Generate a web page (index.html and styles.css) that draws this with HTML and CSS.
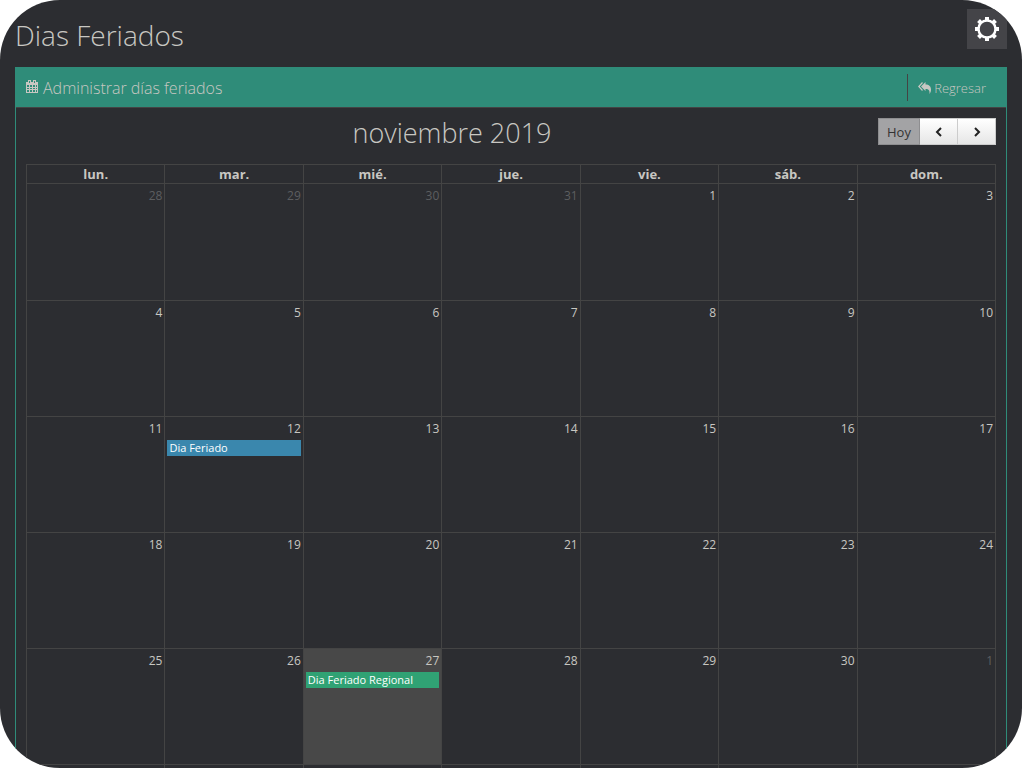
FILE: index.html
```html
<!DOCTYPE html>
<html lang="es">
<head>
    <meta charset="utf-8">
    <title>Dias Feriados</title>
    <meta name="viewport" content="width=device-width, initial-scale=1.0">
    <link rel="stylesheet" href="styles.css">
</head>
<body>
    <div class="page">
        <header class="page-header">
            <h1>Dias Feriados</h1>
            <button type="button" class="settings" aria-label="Opciones">
                <svg width="24" height="24" viewBox="0 0 24 24">
                    <g fill="#fff">
                        <rect x="10" y="0" width="4" height="24"/>
                        <rect x="10" y="0" width="4" height="24" transform="rotate(45 12 12)"/>
                        <rect x="10" y="0" width="4" height="24" transform="rotate(90 12 12)"/>
                        <rect x="10" y="0" width="4" height="24" transform="rotate(135 12 12)"/>
                    </g>
                    <circle cx="12" cy="12" r="8.500" fill="#444448" stroke="#fff" stroke-width="2.500"/>
                </svg>
            </button>
        </header>

        <section class="panel">
            <div class="panel-heading">
                <h2>
                    <svg width="12" height="13" viewBox="0 0 12 13" shape-rendering="crispEdges">
                        <path fill="currentColor" fill-rule="evenodd" d="M0 2h2V0h3v2h2V0h3v2h2v11H0zM1 5v2h2V5zM4 5v2h2V5zM7 5v2h2V5zM10 5v2h1V5zM1 8v1h2V8zM4 8v1h2V8zM7 8v1h2V8zM10 8v1h1V8zM1 10v2h2v-2zM4 10v2h2v-2zM7 10v2h2v-2zM10 10v2h1v-2zM3 1v2h1V1zM8 1v2h1V1z"/>
                    </svg>
                    Administrar días feriados
                </h2>
                <a href="#" class="back">
                    <svg width="13" height="12" viewBox="0 0 13 12">
                        <path fill="none" stroke="currentColor" stroke-width="1.200" d="M4.500.5L.8 4.500L4.500 8.500"/>
                        <path fill="currentColor" d="M7.500 0v2.500c3.500 0 5.500 2 5.500 5 0 2-.6 3.300-1.500 4.500.3-3.500-.5-5-4-5v2L3 4.500z"/>
                    </svg>
                    Regresar
                </a>
            </div>

            <div class="panel-body">
                <div class="toolbar">
                    <h2>noviembre 2019</h2>
                    <div class="button-group">
                        <button type="button" class="today-button" disabled>Hoy</button>
                        <button type="button" aria-label="Anterior">
                            <svg width="8" height="10" viewBox="0 0 8 10"><path d="M6 1L2 5l4 4"/></svg>
                        </button>
                        <button type="button" aria-label="Siguiente">
                            <svg width="8" height="10" viewBox="0 0 8 10"><path d="M2 1l4 4-4 4"/></svg>
                        </button>
                    </div>
                </div>

                <table class="calendar">
                    <thead>
                        <tr>
                            <th>lun.</th>
                            <th>mar.</th>
                            <th>mié.</th>
                            <th>jue.</th>
                            <th>vie.</th>
                            <th>sáb.</th>
                            <th>dom.</th>
                        </tr>
                    </thead>
                    <tbody>
                        <tr>
                            <td class="other-month">28</td>
                            <td class="other-month">29</td>
                            <td class="other-month">30</td>
                            <td class="other-month">31</td>
                            <td>1</td>
                            <td>2</td>
                            <td>3</td>
                        </tr>
                        <tr>
                            <td>4</td>
                            <td>5</td>
                            <td>6</td>
                            <td>7</td>
                            <td>8</td>
                            <td>9</td>
                            <td>10</td>
                        </tr>
                        <tr>
                            <td>11</td>
                            <td>12<a href="#" class="event national">Dia Feriado</a></td>
                            <td>13</td>
                            <td>14</td>
                            <td>15</td>
                            <td>16</td>
                            <td>17</td>
                        </tr>
                        <tr>
                            <td>18</td>
                            <td>19</td>
                            <td>20</td>
                            <td>21</td>
                            <td>22</td>
                            <td>23</td>
                            <td>24</td>
                        </tr>
                        <tr>
                            <td>25</td>
                            <td>26</td>
                            <td class="today">27<a href="#" class="event regional">Dia Feriado Regional</a></td>
                            <td>28</td>
                            <td>29</td>
                            <td>30</td>
                            <td class="other-month">1</td>
                        </tr>
                        <tr>
                            <td></td>
                            <td></td>
                            <td></td>
                            <td></td>
                            <td></td>
                            <td></td>
                            <td></td>
                        </tr>
                    </tbody>
                </table>
            </div>
        </section>
    </div>
</body>
</html>
```
FILE: styles.css
```css
* {
    box-sizing: border-box;
}
body {
    margin: 0;
    background: #fff;
    color: #c8c7c2;
    font-family: "Open Sans", sans-serif;
    font-size: 13px;
}
h1, h2 {
    margin: 0;
    font-weight: 300;
}
button {
    font: inherit;
    cursor: pointer;
}
.page {
    height: 100vh;
    overflow: hidden;
    padding: 0 15px;
    border-radius: 60px;
    background: #2c2d31;
}
.page-header {
    display: flex;
    justify-content: space-between;
    align-items: center;
    height: 67px;
}
.page-header h1 {
    font-size: 28px;
    line-height: 40px;
    padding-top: 2px;
}
.settings {
    display: flex;
    align-items: center;
    justify-content: center;
    width: 40px;
    height: 40px;
    margin-bottom: 9px;
    padding: 0;
    border: 0;
    background: #444448;
}
.panel {
    border: 1px solid #2f8c79;
}
.panel-heading {
    display: flex;
    justify-content: space-between;
    align-items: center;
    height: 40px;
    padding: 0 10px;
    background: #2f8c79;
    border-bottom: 1px solid #444;
}
.panel-heading h2 {
    display: flex;
    gap: 5px;
    font-size: 16px;
    line-height: 22px;
}
.panel-heading h2 svg {
    margin-top: 3px;
}
.back {
    display: flex;
    align-items: center;
    gap: 3px;
    height: 27px;
    padding: 0 10px;
    border-left: 1px solid #444;
    color: inherit;
    font-weight: 300;
    text-decoration: none;
}
.panel-body {
    padding: 10px;
}
.toolbar {
    display: flex;
    margin-bottom: 10px;
}
.toolbar h2 {
    flex: 1;
    text-align: center;
    font-size: 27px;
    line-height: 30px;
    height: 36px;
}
.button-group {
    display: flex;
    height: 27px;
}
.button-group button {
    display: flex;
    align-items: center;
    justify-content: center;
    width: 38px;
    padding: 0;
    border: 1px solid #ccc;
    border-left-width: 0;
    background: linear-gradient(#fff, #e6e6e6);
    color: #333;
}
.button-group .today-button {
    width: 42px;
    border: 1px solid #8e8e90;
    background: #a3a3a5;
}
.button-group path {
    fill: none;
    stroke: #222;
    stroke-width: 2;
}
.calendar {
    width: 100%;
    table-layout: fixed;
    border-collapse: collapse;
}
.calendar th {
    height: 19px;
    padding: 0;
    border: 1px solid #444;
    font-weight: 700;
    line-height: 18px;
}
.calendar td {
    height: 116px;
    padding: 3px 2px 0;
    border: 1px solid #444;
    text-align: right;
    vertical-align: top;
    font-size: 12px;
    line-height: 18px;
}
.calendar tbody tr:first-child td {
    height: 117px;
}
.calendar .other-month {
    color: #5d5e60;
}
.calendar .today {
    background: #484848;
}
.event {
    display: block;
    height: 16px;
    margin-top: 2px;
    padding: 0 2px;
    color: #fff;
    text-align: left;
    text-decoration: none;
    font-size: 11px;
    line-height: 16px;
}
.national {
    background: #3a87ad;
}
.regional {
    background: #30a274;
}
```
